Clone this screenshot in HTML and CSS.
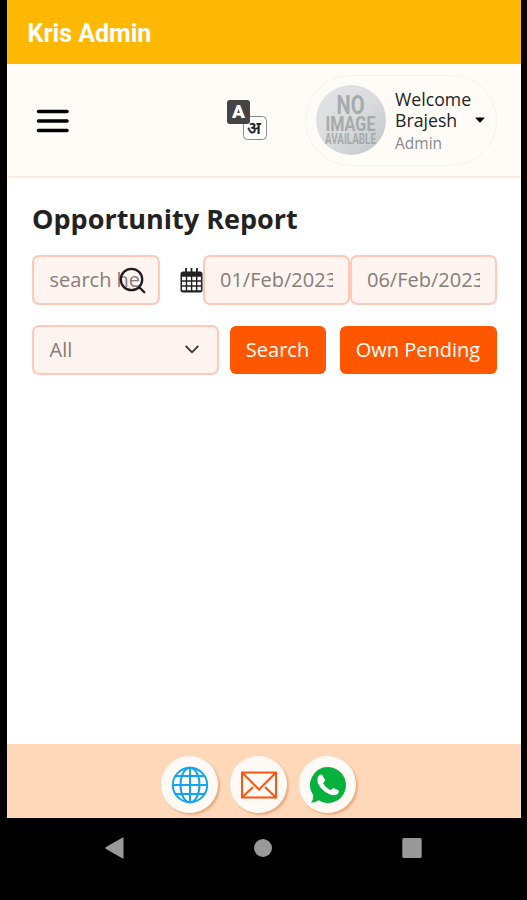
FILE: index.html
```html
<!DOCTYPE html>
<html lang="en">
<head>
<meta charset="utf-8">
<title>Kris Admin</title>
<link rel="stylesheet" href="styles.css">
</head>
<body>
<div class="screen">
  <header class="appbar"><span>Kris Admin</span></header>
  <div class="toolbar">
    <svg class="menu" width="33" height="24" viewBox="0 0 33 24" stroke="#000" stroke-width="3.6" stroke-linecap="round"><path d="M2.500 2.500H31M2.500 12H31M2.500 21.500H31"/></svg>
    <svg class="lang" width="42" height="42" viewBox="0 0 42 42">
      <rect x="17.500" y="17.500" width="23" height="23" rx="4" fill="#fff" stroke="#8b8b8b"/>
      <rect x="1" y="1" width="23" height="24" rx="3" fill="#444"/>
      <text class="lang-a" x="12.500" y="18.500" text-anchor="middle">A</text>
      <text class="lang-hi" x="28" y="35" text-anchor="middle">अ</text>
    </svg>
    <div class="profile">
      <svg class="avatar" width="70" height="70" viewBox="0 0 70 70">
        <defs><linearGradient id="g" x1="0" y1="0" x2="1" y2="1"><stop offset="0" stop-color="#e3e5e6"/><stop offset=".55" stop-color="#d8dadb"/><stop offset="1" stop-color="#c0c4c6"/></linearGradient></defs>
        <circle cx="35" cy="35" r="35" fill="url(#g)"/>
        <g class="noimg" fill="#a6aaac">
          <text x="20.500" y="29" font-size="26" textLength="28" lengthAdjust="spacingAndGlyphs">NO</text>
          <text x="9.500" y="46" font-size="20" textLength="50" lengthAdjust="spacingAndGlyphs">IMAGE</text>
          <text x="9" y="58.500" font-size="14" textLength="51" lengthAdjust="spacingAndGlyphs">AVAILABLE</text>
        </g>
      </svg>
      <div class="who"><div>Welcome</div><div>Brajesh</div><div class="role">Admin</div></div>
      <svg class="caret" width="10" height="6" viewBox="0 0 10 6"><path d="M.6 .4H9.400Q9.800 .8 9.400 1.200L5.600 5.200Q5 5.700 4.400 5.200L.6 1.200Q.2 .8 .6 .4Z"/></svg>
    </div>
  </div>
  <main>
    <h1>Opportunity Report</h1>
    <div class="row">
      <div class="field search"><span class="clip">search here</span>
        <svg class="glass" width="28" height="28" viewBox="0 0 28 28" fill="none" stroke="#1d1d1d" stroke-width="2.300" stroke-linecap="round"><circle cx="12.500" cy="12.500" r="10.700"/><path d="M20.200 20.200L25.300 25.300"/></svg>
      </div>
      <svg class="cal" width="23" height="25" viewBox="0 0 23 25"><path d="M3 3.500H20Q22.500 3.500 22.500 6V22Q22.500 24.500 20 24.500H3Q.5 24.500 .5 22V6Q.5 3.500 3 3.500Z" fill="#222"/><path d="M6 0V5M11.500 0V5M17 0V5" stroke="#222" stroke-width="1.800"/><path fill="#fff" d="M2 8.700h3.800v3.500H2zM7.200 8.700h3.700v3.500H7.200zM12.300 8.700h3.700v3.500h-3.700zM17.400 8.700h3.500v3.500h-3.500zM2 13.700h3.800v3.500H2zM7.200 13.700h3.700v3.500H7.200zM12.300 13.700h3.700v3.500h-3.700zM17.400 13.700h3.500v3.500h-3.500zM2 18.700h3.800v3.600H2zM7.200 18.700h3.700v3.600H7.200zM12.300 18.700h3.700v3.600h-3.700zM17.400 18.700h3.500v3.600h-3.500z"/></svg>
      <div class="field date"><span class="clip">01/Feb/2023</span></div>
      <div class="field date to"><span class="clip">06/Feb/2023</span></div>
    </div>
    <div class="row second">
      <div class="field select"><span>All</span>
        <svg width="14" height="9" viewBox="0 0 14 9" fill="none" stroke="#3d3a39" stroke-width="1.900" stroke-linecap="round" stroke-linejoin="round"><path d="M1.200 1.400L7 7.300L12.800 1.400"/></svg>
      </div>
      <button class="go">Search</button>
      <button class="own">Own Pending</button>
    </div>
  </main>
  <footer>
    <div class="round"><svg width="38" height="38" viewBox="0 0 38 38" fill="none" stroke="#12a5f4" stroke-width="2"><circle cx="19" cy="19" r="17.200"/><ellipse cx="19" cy="19" rx="9.500" ry="17.200"/><path d="M19 1.800V36.200M1.800 19H36.200M4.500 10H33.500M4.500 28H33.500"/></svg></div>
    <div class="round"><svg width="38" height="38" viewBox="0 0 38 38" fill="none" stroke="#ff5410" stroke-width="2"><rect x="2" y="6.500" width="34" height="25"/><path d="M2.500 7L19 23.500L35.500 7M2.500 31L13 21M35.500 31L25 21"/></svg></div>
    <div class="round"><svg width="38" height="38" viewBox="0 0 38 38"><path fill="#06b23c" d="M19 1a18 18 0 1 1-9.500 33.300Q7 36.500 2 36.700Q4.500 33.500 4.200 29.200A18 18 0 0 1 19 1Z"/><path fill="#fff" d="M9.200 10.500Q11.500 7.700 13.300 9L16 13.800Q16.400 15.300 14 17.300Q16.500 22 21.500 24.300Q23.500 22 25 22.200L29.600 24.500Q30.500 26.700 27.500 28.700Q23.500 30.300 17 26.500Q11 22.500 8.700 16.500Q7.700 12.700 9.200 10.500Z"/></svg></div>
  </footer>
</div>
<nav>
  <svg width="19" height="22" viewBox="0 0 19 22"><path d="M18.500 1V21Q18.500 22 17.300 21.300L1 12Q-.3 11 1 10L17.300 .7Q18.500 0 18.500 1Z" fill="#999"/></svg>
  <svg width="18" height="18" viewBox="0 0 18 18"><circle cx="9" cy="9" r="9" fill="#999"/></svg>
  <svg width="20" height="20" viewBox="0 0 20 20"><rect x=".3" width="19.400" height="20" rx="1.500" fill="#999"/></svg>
</nav>
</body>
</html>
```

FILE: styles.css
```css
* { box-sizing: border-box; }
body { margin: 0; height: 900px; overflow: hidden; background: #000; font-family: "Open Sans", sans-serif; color: #222; }
svg { display: block; flex: none; }
.screen { margin: 0 6px 0 7px; height: 818px; background: #fff; display: flex; flex-direction: column; }
.appbar { height: 64px; background: #ffb904; display: flex; align-items: center; padding: 2px 0 0 20.500px; color: #fff; font: 700 25px Roboto, sans-serif; }
.toolbar { height: 114px; background: #fffcf8; border-bottom: 2px solid #ffeadf; display: flex; align-items: center; padding: 0 24px 0 29px; }
.menu { margin-top: 1px; }
.lang { margin-left: 157px; }
.lang-a { font: 900 19px Roboto, sans-serif; fill: #fff; }
.lang-hi { font: 600 17px "Noto Sans", sans-serif; fill: #222; }
.profile { margin-left: auto; width: 192px; height: 91px; border: 1px solid #f4f1ef; border-radius: 46px; display: flex; align-items: center; padding: 0 11px 0 10px; }
.noimg { font-family: Roboto, sans-serif; font-weight: 700; }
.who { margin: 3px 0 0 9px; font-size: 17.700px; line-height: 21.500px; white-space: nowrap; }
.role { font-size: 15.500px; line-height: 22.500px; color: #8b8989; }
.caret { margin-left: auto; }
main { flex: 1; padding: 21px 24px 0 25px; }
h1 { margin: 0; font-size: 27px; line-height: 40px; font-weight: 700; letter-spacing: 0; white-space: nowrap; }
.row { display: flex; align-items: center; margin-top: 16px; }
.second { margin-top: 20px; }
.field { position: relative; height: 50px; border: 2px solid #ffc8b9; border-radius: 7px; background: #fff4ef; color: #857d7a; font-size: 20px; display: flex; align-items: center; padding: 0 15px 2px; }
.clip { overflow: hidden; white-space: nowrap; }
.search, .select { padding-left: 15.500px; }
.search { width: 128px; }
.search .clip { width: 91px; }
.glass { position: absolute; left: 85px; top: 9.500px; }
.cal { margin-left: 20px; }
.date { width: 147px; }
.select { width: 187px; justify-content: space-between; padding-right: 18px; }
button { height: 48px; border: 0; border-radius: 6px; background: #ff5700; color: #fff; font: 20px "Open Sans", sans-serif; padding: 0 0 1px; white-space: nowrap; }
.go { width: 96px; margin-left: 10.500px; }
.own { width: 157px; margin-left: 14px; }
footer { height: 74px; background: #fed8b9; display: flex; justify-content: center; gap: 12px; padding-top: 12px; padding-right: 11px; }
.round { width: 57px; height: 57px; border-radius: 50%; background: #fffaf6; box-shadow: 2px 2px 2px #eaad83; display: flex; align-items: center; justify-content: center; }
nav { height: 60px; display: flex; align-items: center; justify-content: space-between; padding: 0 105px; }
```
